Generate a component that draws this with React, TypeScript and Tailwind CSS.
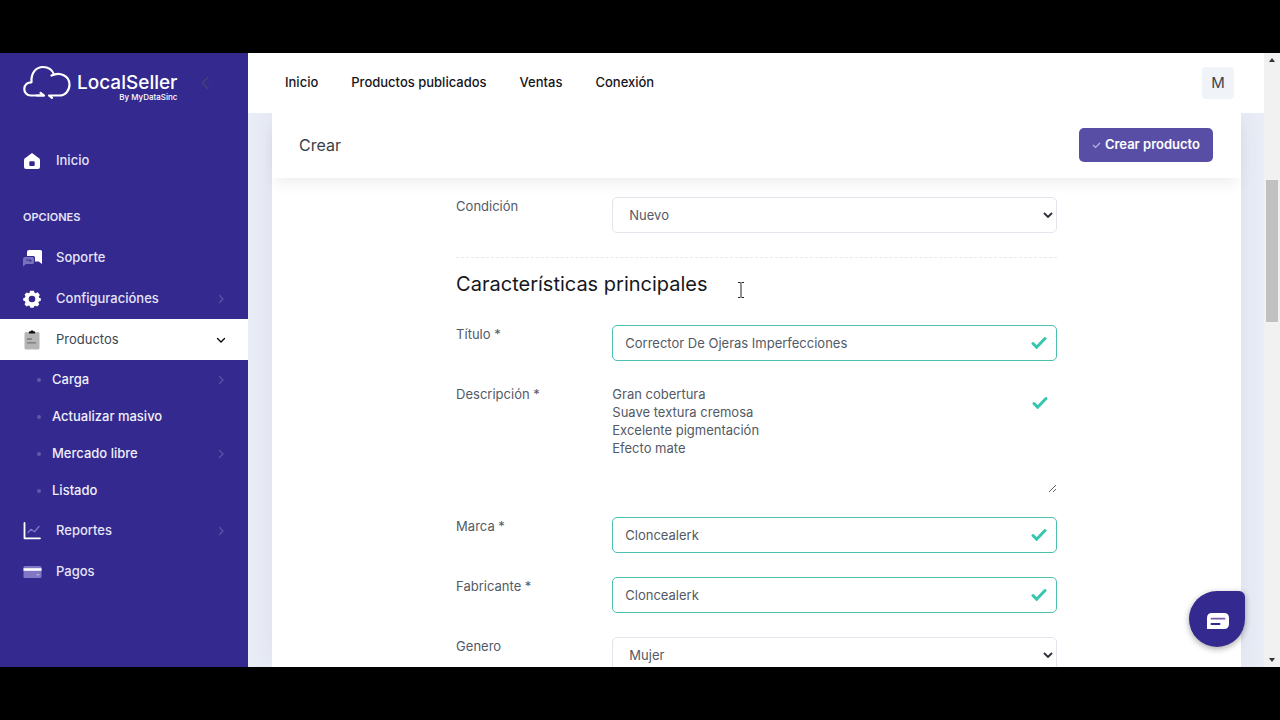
import { ReactNode, useState } from "react";
import clsx from "clsx";

interface MenuItem {
    label: string;
    icon: ReactNode;
    arrow?: boolean;
}

const HomeIcon = () => (
    <svg viewBox="0 0 18 18" className="w-[18px]" fill="none">
        <path d="M9 1 16 6.2Q17 7 17 8.2V15q0 2-2 2H3q-2 0-2-2V8.2Q1 7 2 6.2Z" fill="#fff" />
        <rect x="6.3" y="9.3" width="5.4" height="4.8" rx="0.8" fill="#33298f" />
    </svg>
);

const SupportIcon = () => (
    <svg viewBox="0 0 20 18" className="w-5" fill="none">
        <path d="M6 1h11.5Q19 1 19 2.5V15l-3.2-2.5H12V8.5Q12 7 10.5 7H4V3q0-2 2-2Z" fill="#fff" />
        <path d="M2 8h7.5Q11 8 11 9.5v4q0 1.5-1.5 1.5H3l-3 2.5V10q0-2 2-2Z" fill="#8f88cc" fillOpacity="0.75" />
        <path d="M3 11h5v1.2H6.5" stroke="#33298f" strokeWidth="0.9" />
    </svg>
);

const GearIcon = () => (
    <svg viewBox="0 0 18 18" className="w-[18px]">
        <path
            d="M7 .8h4l.5 2 1.2.5 2-1 2.2 2.6-1.1 1.7.4 1.1 1.6.6v2.4l-1.9.7-.5 1.2.8 1.9-2 2-1.9-.8-1.1.5-.6 1.5H7.4l-.7-1.6-1.2-.5-2 .8-1.9-2.1.8-1.9-.4-1.1L.2 10.6V8.2l1.8-.6.5-1.2-.9-1.9 2.1-2.1 1.8.9 1.1-.5ZM9 5.7A3.3 3.3 0 1 0 9 12.3 3.3 3.3 0 1 0 9 5.7Z"
            fill="#fff"
            fillRule="evenodd"
        />
    </svg>
);

const ClipboardIcon = () => (
    <svg viewBox="0 0 18 20" className="w-[18px]" fill="none">
        <rect x="1.5" y="2" width="15" height="17.5" rx="1.5" fill="#b5b5b5" />
        <path d="M6 3.6V2q0-.7.8-.7h.7Q9-.6 10.5 1.3h.7q.8 0 .8.7v1.6Z" fill="#111" />
        <path d="M4.5 9h4M4.5 12.8h8" stroke="#777" strokeWidth="1.3" strokeLinecap="round" />
    </svg>
);

const ChartIcon = () => (
    <svg viewBox="0 0 18 18" className="w-[18px]" fill="none">
        <path d="M1.5 1v15.3H17" stroke="#fff" strokeWidth="1.8" strokeLinecap="round" strokeLinejoin="round" />
        <path d="m5 10.5 3-3.2 3.5 2.5L16 4.5" stroke="#7d75c4" strokeWidth="1.4" strokeLinecap="round" strokeLinejoin="round" />
    </svg>
);

const CardIcon = () => (
    <svg viewBox="0 0 19 14" className="w-[19px]" fill="none">
        <rect x="0.5" y="1" width="18" height="12" rx="1.5" fill="#8078c4" />
        <path d="M.5 3.2h18v2.6H.5Z" fill="#fff" />
        <rect x="13.5" y="9" width="3" height="1.3" rx="0.6" fill="#b7b2e4" />
    </svg>
);

const Arrow = ({ className }: { className?: string }) => (
    <svg viewBox="0 0 10 10" className={clsx("w-[10px]", className)} fill="none" stroke="currentColor" strokeWidth="1.3">
        <path d="m3.5 1.5 3.5 3.5-3.5 3.5" strokeLinecap="round" strokeLinejoin="round" />
    </svg>
);

const Check = ({ className }: { className?: string }) => (
    <svg viewBox="0 0 16 14" className={clsx("pointer-events-none absolute w-4", className)} fill="none">
        <path d="m2 7.5 3.6 3.8L14 2.5" stroke="#36c6b0" strokeWidth="3" strokeLinecap="round" strokeLinejoin="round" />
    </svg>
);

const Logo = () => (
    <a href="#" className="flex items-start gap-[6px] text-white">
        <svg viewBox="0 0 48 34" className="w-12" fill="none" stroke="#fff" strokeWidth="2.2" strokeLinecap="round" strokeLinejoin="round">
            <path d="M20.5 30.5H7.5A6.3 6.3 0 0 1 1.3 24c0-4 3-6.7 7.2-6.7C7.8 8 13 2 20 2c5.3 0 9.3 3 11 7.3" />
            <path d="M17.5 27.8l3.5 2.7H14" />
            <path d="M28.5 10.5C37 6.3 46.5 11 46.5 19.5c0 6.5-4.5 11-10 11H26l3 2.4" />
        </svg>
        <span className="flex flex-col items-end pt-2">
            <span className="text-[19px] leading-5 font-medium">LocalSeller</span>
            <span className="text-[8px] leading-2 font-medium">By MyDataSinc</span>
        </span>
    </a>
);

const MenuLink = ({ item, active }: { item: MenuItem; active?: boolean }) => (
    <li>
        <a
            href="#"
            className={clsx(
                "flex h-[41px] items-center pl-[23px] pr-[22px]",
                active ? "bg-white font-normal text-[#3b4450]" : "font-medium text-[#e6e4f7]"
            )}
        >
            <span className="flex w-[33px] items-center">{item.icon}</span>
            <span className="flex-1">{item.label}</span>
            {item.arrow && <Arrow className={active ? "rotate-90 text-black" : "text-[#5c54a8]"} />}
        </a>
    </li>
);

const subItems = [
    { label: "Carga", arrow: true },
    { label: "Actualizar masivo", arrow: false },
    { label: "Mercado libre", arrow: true },
    { label: "Listado", arrow: false },
];

const Sidebar = () => (
    <aside className="w-[248px] shrink-0 bg-[#33298f] text-[13px]">
        <div className="flex h-[60px] items-center justify-between pl-[23px] pr-[34px]">
            <Logo />
            <button type="button" aria-label="Contraer menú">
                <svg viewBox="0 0 14 16" className="w-[14px]" fill="none" strokeWidth="1.8">
                    <path d="M8 2 2.5 8 8 14" stroke="#433f78" />
                    <path d="M13 2 7.5 8l5.5 6" stroke="#372d93" />
                </svg>
            </button>
        </div>
        <nav className="pt-[27px]">
            <ul>
                <MenuLink item={{ label: "Inicio", icon: <HomeIcon /> }} />
            </ul>
            <h4 className="flex h-14 items-center pt-4 pl-[23px] text-[11px] font-semibold text-[#e6e4f7]">OPCIONES</h4>
            <ul>
                <MenuLink item={{ label: "Soporte", icon: <SupportIcon /> }} />
                <MenuLink item={{ label: "Configuraciónes", icon: <GearIcon />, arrow: true }} />
                <MenuLink item={{ label: "Productos", icon: <ClipboardIcon />, arrow: true }} active />
                <li>
                    <ul className="py-px">
                        {subItems.map((item) => (
                            <li key={item.label}>
                                <a href="#" className="flex h-[37px] items-center pl-[37px] pr-[22px] font-medium text-[#f0effa]">
                                    <span className="mr-[11px] size-1 rounded-full bg-[#6159ad]" />
                                    <span className="flex-1">{item.label}</span>
                                    {item.arrow && <Arrow className="text-[#5c54a8]" />}
                                </a>
                            </li>
                        ))}
                    </ul>
                </li>
                <MenuLink item={{ label: "Reportes", icon: <ChartIcon />, arrow: true }} />
                <MenuLink item={{ label: "Pagos", icon: <CardIcon /> }} />
            </ul>
        </nav>
    </aside>
);

const Row = ({ id, label, children }: { id: string; label: string; children: ReactNode }) => (
    <div className="flex items-start">
        <label htmlFor={id} className="w-[26%] shrink-0 leading-[18px]">
            {label}
        </label>
        <div className="relative flex flex-1">{children}</div>
    </div>
);

const TextField = ({ id, label, initial }: { id: string; label: string; initial: string }) => {
    const [value, setValue] = useState(initial);

    return (
        <Row id={id} label={label}>
            <input
                id={id}
                type="text"
                value={value}
                onChange={(e) => setValue(e.target.value)}
                className="h-9 w-full rounded-[5px] border border-[#4dbfae] bg-white pr-9 pl-3 outline-none"
            />
            <Check className="top-[11px] right-[10px]" />
        </Row>
    );
};

const SelectField = ({ id, label, options }: { id: string; label: string; options: string[] }) => (
    <Row id={id} label={label}>
        <select id={id} className="h-9 w-full appearance-none rounded-[5px] border border-[#e2e5ec] bg-white px-4 pt-px outline-none">
            {options.map((option) => (
                <option key={option}>{option}</option>
            ))}
        </select>
        <svg viewBox="0 0 10 8" className="pointer-events-none absolute top-[14px] right-1 w-[10px]" fill="none">
            <path d="m1 2 4 4 4-4" stroke="#2b2f36" strokeWidth="1.9" />
        </svg>
    </Row>
);

const TextCursor = () => (
    <svg viewBox="0 0 8 16" className="absolute top-3 left-[281px] w-2" fill="none" stroke="#222">
        <path d="M1 .5h2.2l.8.8.8-.8H7M4 1.3v13.4M1 15.5h2.2l.8-.8.8.8H7" />
    </svg>
);

const navLinks = ["Inicio", "Productos publicados", "Ventas", "Conexión"];

const Topbar = () => (
    <header className="z-10 flex h-[60px] shrink-0 items-center justify-between bg-white pr-[30px] pl-[37px]">
        <nav className="flex gap-[33px] text-[13px] font-medium text-[#15151c]">
            {navLinks.map((link) => (
                <a key={link} href="#">
                    {link}
                </a>
            ))}
        </nav>
        <button type="button" className="size-8 rounded-[4px] bg-[#f0f3f7] text-[15px] text-[#3b4450]">
            M
        </button>
    </header>
);

const ProductForm = () => (
    <form className="mx-auto flex w-[62%] flex-col gap-6 pt-[19px] text-[13px] text-[#535a66]">
        <SelectField id="condicion" label="Condición" options={["Nuevo", "Usado"]} />
        <div className="border-t border-dashed border-[#e6e8ee] pt-3">
            <h3 className="relative mb-[27px] text-[20px] leading-7 text-[#16171c]">
                Características principales
                <TextCursor />
            </h3>
            <TextField id="titulo" label="Título *" initial="Corrector De Ojeras Imperfecciones" />
        </div>
        <Row id="descripcion" label="Descripción *">
            <textarea
                id="descripcion"
                className="h-[108px] w-full resize-y leading-[18px] outline-none"
                defaultValue={"Gran cobertura\nSuave textura cremosa\nExcelente pigmentación\nEfecto mate"}
            />
            <Check className="top-[11px] right-[9px]" />
        </Row>
        <TextField id="marca" label="Marca *" initial="Cloncealerk" />
        <TextField id="fabricante" label="Fabricante *" initial="Cloncealerk" />
        <SelectField id="genero" label="Genero" options={["Mujer", "Hombre"]} />
    </form>
);

const Scrollbar = () => (
    <div className="flex w-4 shrink-0 flex-col items-center bg-[#f1f1f1] py-[5px]">
        <svg viewBox="0 0 6 4" className="w-[6px]">
            <path d="M0 4 3 0l3 4Z" fill="#333" />
        </svg>
        <div className="mt-[118px] mb-auto h-[142px] w-3 bg-[#c1c1c1]" />
        <svg viewBox="0 0 6 4" className="w-[6px]">
            <path d="M0 0h6L3 4Z" fill="#333" />
        </svg>
    </div>
);

export default function App() {
    return (
        <div className="h-screen bg-black py-[53px] font-['Inter',sans-serif]">
            <div className="relative flex h-full overflow-hidden bg-white">
                <Sidebar />
                <main className="flex min-w-0 flex-1 flex-col overflow-hidden bg-[#e9edf6]">
                    <Topbar />
                    <section className="mr-[23px] ml-6 min-h-0 flex-1 bg-white shadow-[0_0_30px_rgba(82,63,105,0.07)]">
                        <div className="relative flex h-[65px] items-center justify-between bg-white pr-7 pb-px pl-[27px] shadow-[0_8px_14px_-4px_rgba(70,70,80,0.1)]">
                            <h2 className="text-base text-[#3a3d45]">Crear</h2>
                            <button
                                type="button"
                                className="flex h-[34px] items-center gap-1 rounded-[5px] bg-[#594ea6] px-[13px] text-[13px] font-semibold text-white"
                            >
                                <svg viewBox="0 0 9 8" className="w-[9px]" fill="none">
                                    <path d="m1 4 2.5 2.5L8 2" stroke="#b9b3e0" strokeWidth="1.2" />
                                </svg>
                                Crear producto
                            </button>
                        </div>
                        <ProductForm />
                    </section>
                </main>
                <Scrollbar />
                <button
                    type="button"
                    aria-label="Abrir chat"
                    className="absolute right-[35px] bottom-5 z-20 flex size-14 items-center justify-center rounded-[28px] rounded-tr-[6px] bg-[#33298f] shadow-[0_2px_6px_rgba(0,0,0,0.35)]"
                >
                    <svg viewBox="0 0 24 18" className="mt-[3px] ml-px w-6" fill="none">
                        <path d="M6 1h12q5 0 5 5v6q0 5-5 5H1V6q0-5 5-5Z" fill="#fff" />
                        <path d="M5.5 6.7h13" stroke="#7a5aa8" strokeWidth="1.8" strokeLinecap="round" />
                        <path d="M5.5 12h8" stroke="#33298f" strokeWidth="2" strokeLinecap="round" />
                    </svg>
                </button>
            </div>
        </div>
    );
}
